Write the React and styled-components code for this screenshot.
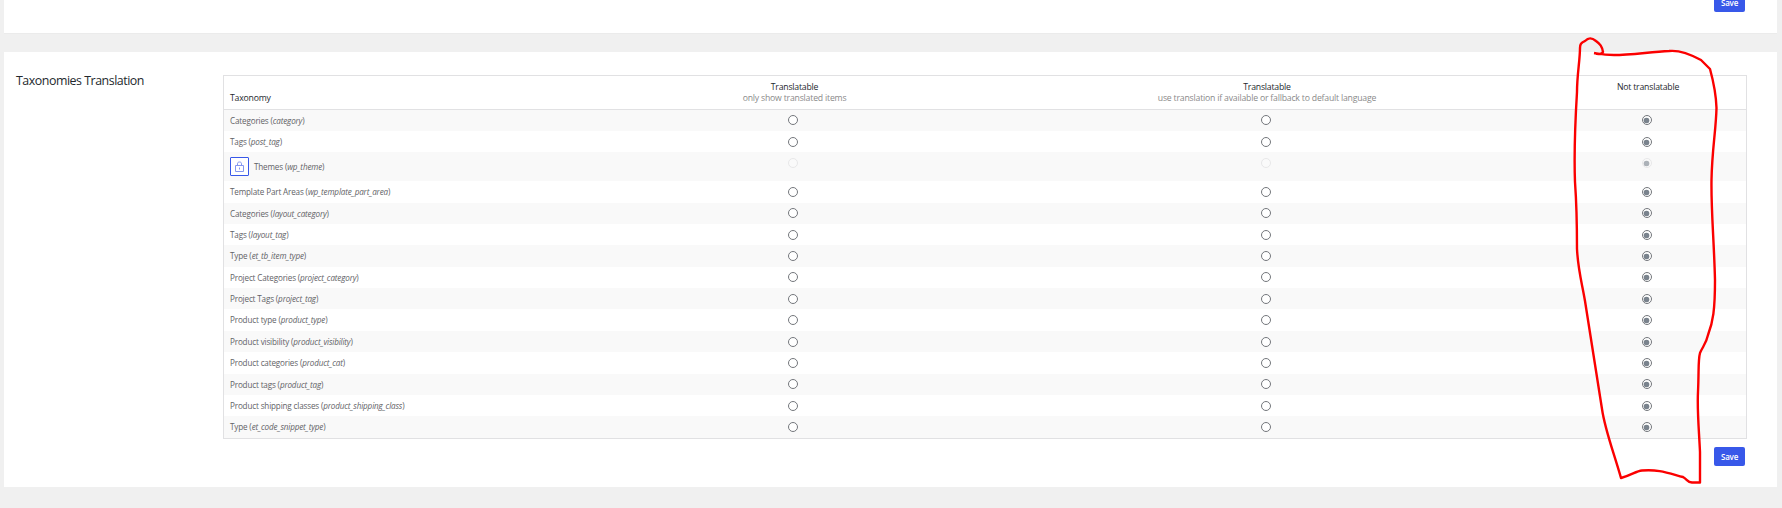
import styled, { createGlobalStyle } from "styled-components";

// [label, slug, row height, radio offset, locked]
const taxonomies = [
    ["Categories", "category", 21, 5],
    ["Tags", "post_tag", 21, 6],
    ["Themes", "wp_theme", 29, 6, true],
    ["Template Part Areas", "wp_template_part_area", 22, 6],
    ["Categories", "layout_category", 21, 5],
    ["Tags", "layout_tag", 21, 6],
    ["Type", "et_tb_item_type", 22, 6],
    ["Project Categories", "project_category", 21, 5],
    ["Project Tags", "project_tag", 21, 6],
    ["Product type", "product_type", 22, 6],
    ["Product visibility", "product_visibility", 21, 6],
    ["Product categories", "product_cat", 22, 6],
    ["Product tags", "product_tag", 21, 5],
    ["Product shipping classes", "product_shipping_class", 21, 6],
    ["Type", "et_code_snippet_type", 22, 6],
];

function LockIcon(){
    return(
        <svg width="11" height="12" viewBox="0 0 11 12" fill="none" stroke="#8497f0">
            <path d="M1.5 4.5h8v6h-8z" />
            <path d="M3.5 4.5V2.8C3.5 1.4 4.3 1 5.5 1S7.5 1.4 7.5 2.8V4.5" />
            <path d="M5.5 6.5v2" />
        </svg>
    );
}

function TaxonomyRow({item, striped}){
    const [label, slug, height, offset, locked] = item;
    return(
        <Row $height={height} $striped={striped}>
            <NameCell $locked={locked}>
                {locked && <LockBox><LockIcon /></LockBox>}
                <span>{label} (<em>{slug}</em>)</span>
            </NameCell>
            <RadioCell $offset={offset}><Radio $disabled={locked} /></RadioCell>
            <RadioCell $offset={offset}><Radio $disabled={locked} /></RadioCell>
            <RadioCell $offset={offset}><Radio $checked $disabled={locked} /></RadioCell>
        </Row>
    );
}

export default function App(){
    return(
        <Page>
            <GlobalStyle />
            <PreviousPanel>
                <SaveButton>Save</SaveButton>
            </PreviousPanel>
            <Panel>
                <Title>Taxonomies Translation</Title>
                <Content>
                    <Table>
                        <HeadRow>
                            <HeadName>Taxonomy</HeadName>
                            <HeadCell>Translatable<small>only show translated items</small></HeadCell>
                            <HeadCell>Translatable<small>use translation if available or fallback to default language</small></HeadCell>
                            <HeadCell>Not translatable</HeadCell>
                        </HeadRow>
                        {taxonomies.map((item, index) => (
                            <TaxonomyRow key={item[1]} item={item} striped={index % 2 === 0} />
                        ))}
                    </Table>
                    <SaveButton>Save</SaveButton>
                </Content>
            </Panel>
            <Marker viewBox="0 0 1782 508">
                <path d="M1595 53C1598 55 1602 54 1603 52C1602 46 1600 44 1596 41C1591 37 1588 38 1585 41C1581 43 1580 44 1580 48C1580 60 1577 75 1577 92C1575 125 1574 155 1575 182C1577 210 1577 225 1577 249C1578 270 1582 283 1585 301C1590 332 1596 370 1602 409C1605 430 1613 450 1621 478C1632 475 1636 471 1642 470.5C1658 469 1668 473 1683 477C1688 480 1687 482 1692 482.5H1700V452C1699 430 1697 410 1698 392C1699 370 1698 360 1700 353C1703 346 1706 344 1708 335C1713 322 1715 310 1715 280C1714 240 1711 210 1711.500 180C1712 150 1716 130 1716.500 108C1716 92 1713 80 1710 69L1701 60C1690 54 1678 50 1669 51C1650 52 1630 55 1614 55C1604 55 1600 54 1594 53" />
            </Marker>
        </Page>
    );
}

const GlobalStyle = createGlobalStyle`
    * {
        box-sizing: border-box;
    }
    body {
        margin: 0;
        background: #f0f0f0;
        font-family: "Open Sans", "Noto Sans", sans-serif;
    }
`;
const Page = styled.div`
    position: relative;
    height: 508px;
    padding: 0 5px 0 4px;
    overflow: hidden;
`;
const PreviousPanel = styled.section`
    display: flex;
    justify-content: flex-end;
    align-items: flex-end;
    height: 33px;
    margin-bottom: 19px;
    padding: 0 32px 21px 0;
    background: #fff;
    box-shadow: 0 1px 0 #ebebeb;
`;
const Panel = styled.section`
    display: flex;
    height: 435px;
    padding: 23px 30px 0 12px;
    background: #fff;
`;
const Title = styled.h3`
    width: 207px;
    margin: 0;
    color: #23282d;
    font-size: 12.4px;
    font-weight: 400;
    line-height: 11px;
    letter-spacing: -0.47px;
    white-space: nowrap;
`;
const Content = styled.div`
    display: flex;
    flex: 1;
    flex-direction: column;
    align-items: flex-end;
    gap: 8px;

    > button {
        margin-right: 2px;
    }
`;
const Table = styled.div`
    width: 100%;
    border: 1px solid #e1e1e3;
`;
const Row = styled.div`
    display: grid;
    grid-template-columns: 381px 379px 566px 196px;
    height: ${({$height}) => $height}px;
    background: ${({$striped}) => $striped ? "#f9f9f9" : "#fff"};
`;
const HeadRow = styled(Row)`
    height: 34px;
    border-bottom: 1px solid #e1e1e3;
    background: #fff;
    color: #25292e;
    font-size: 8.7px;
    line-height: 11px;
    letter-spacing: -0.2px;
`;
const HeadName = styled.div`
    padding: 17px 0 0 6px;
`;
const HeadCell = styled.div`
    padding-top: 6px;
    text-align: center;

    small {
        display: block;
        color: #8a8a8a;
        font-size: inherit;
    }
`;
const NameCell = styled.div`
    display: flex;
    align-items: ${({$locked}) => $locked ? "center" : "flex-start"};
    padding: ${({$locked}) => $locked ? "0 0 0 6px" : "5px 0 0 6px"};
    color: #626266;
    font-size: 8.1px;
    line-height: 12px;
    letter-spacing: -0.15px;
    white-space: nowrap;
`;
const LockBox = styled.span`
    display: flex;
    align-items: center;
    justify-content: center;
    width: 19px;
    height: 19px;
    margin-right: 5px;
    border: 1px solid #3858e9;
    border-radius: 1px;
    background: #fff;
`;
const RadioCell = styled.div`
    display: flex;
    justify-content: center;
    padding: ${({$offset}) => $offset}px 3px 0 0;
`;
const Radio = styled.span`
    display: flex;
    align-items: center;
    justify-content: center;
    width: 10px;
    height: 10px;
    border: 1px solid #74777c;
    border-radius: 50%;
    background: #fff;
    ${({$disabled}) => $disabled && "border-color: #dcdcde; background: #fbfbfb; opacity: 0.6;"}

    &::before {
        content: "";
        width: 5px;
        height: 5px;
        border-radius: 50%;
        box-shadow: ${({$checked}) => $checked ? "0 0 0 0.3px #7a838d" : "none"};
        background: ${({$checked}) => $checked ? "#7a838d" : "transparent"};
    }
`;
const SaveButton = styled.button`
    width: 31px;
    height: 19px;
    padding: 1px 0 0;
    border: none;
    border-radius: 2px;
    background: #3858e9;
    color: #fff;
    font-family: inherit;
    font-size: 8px;
    font-weight: 600;
    line-height: 18px;
    letter-spacing: -0.2px;
`;
/* hand drawn outline over the last column */
const Marker = styled.svg`
    position: absolute;
    inset: 0;
    width: 1782px;
    height: 508px;
    fill: none;
    stroke: #fb0000;
    stroke-width: 2.4;
    stroke-linejoin: round;
    pointer-events: none;
`;
